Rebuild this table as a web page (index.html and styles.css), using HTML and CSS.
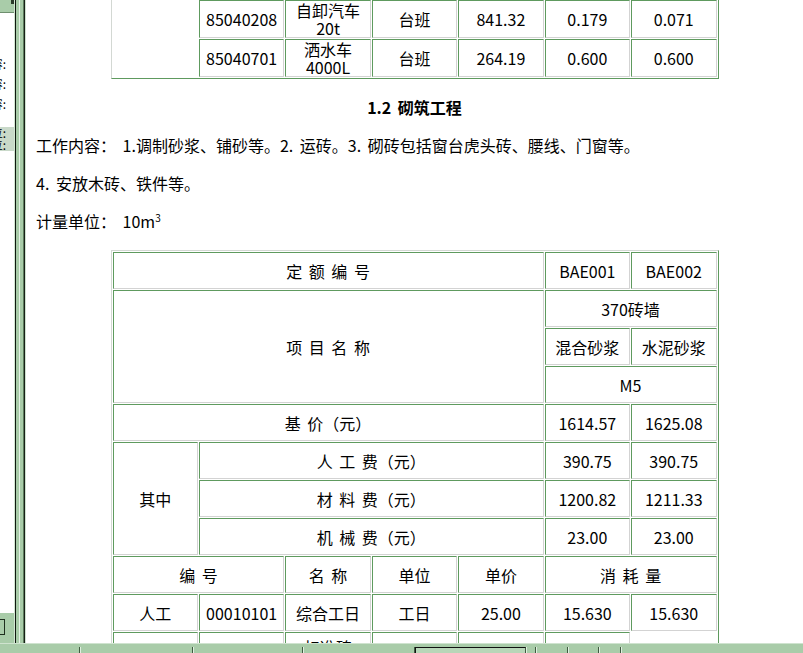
FILE: index.html
```html
<!DOCTYPE html>
<html lang="zh-CN">
<head>
<meta charset="utf-8">
<title>砌筑工程</title>
<link rel="stylesheet" href="styles.css">
</head>
<body>
<div class="app">
  <aside class="side">
    <div class="side-top"><span class="side-arrow"></span></div>
    <div class="side-list">
      <div class="side-item"><span>工作内容:</span></div>
      <div class="side-item"><span>工作内容:</span></div>
      <div class="side-item"><span>工作内容:</span></div>
      <div class="side-gap"></div>
      <div class="side-item sel"><span>计量单位:</span></div>
      <div class="side-item sel2"><span>计量单位:</span></div>
    </div>
    <div class="side-bottom"><span class="side-btn"></span></div>
  </aside>
  <div class="splitter"></div>
  <main class="doc">
    <table class="grid top-grid">
      <colgroup><col><col><col><col><col><col><col></colgroup>
      <tr>
        <td rowspan="2"></td>
        <td>85040208</td>
        <td>自卸汽车<br>20t</td>
        <td>台班</td>
        <td>841.32</td>
        <td>0.179</td>
        <td>0.071</td>
      </tr>
      <tr>
        <td>85040701</td>
        <td>洒水车<br>4000L</td>
        <td>台班</td>
        <td>264.19</td>
        <td>0.600</td>
        <td>0.600</td>
      </tr>
    </table>

    <h3 class="section-title">1.2 砌筑工程</h3>
    <p class="para">工作内容： 1.调制砂浆、铺砂等。2. 运砖。3. 砌砖包括窗台虎头砖、腰线、门窗等。</p>
    <p class="para">4. 安放木砖、铁件等。</p>
    <p class="para">计量单位： 10m<sup>3</sup></p>

    <table class="grid main-grid">
      <colgroup><col><col><col><col><col><col><col></colgroup>
      <tr>
        <td colspan="5">定 额 编 号</td>
        <td>BAE001</td>
        <td>BAE002</td>
      </tr>
      <tr>
        <td colspan="5" rowspan="3">项 目 名 称</td>
        <td colspan="2">370砖墙</td>
      </tr>
      <tr>
        <td>混合砂浆</td>
        <td>水泥砂浆</td>
      </tr>
      <tr>
        <td colspan="2">M5</td>
      </tr>
      <tr>
        <td colspan="5">基 价（元）</td>
        <td>1614.57</td>
        <td>1625.08</td>
      </tr>
      <tr>
        <td rowspan="3">其中</td>
        <td colspan="4">人 工 费（元）</td>
        <td>390.75</td>
        <td>390.75</td>
      </tr>
      <tr>
        <td colspan="4">材 料 费（元）</td>
        <td>1200.82</td>
        <td>1211.33</td>
      </tr>
      <tr>
        <td colspan="4">机 械 费（元）</td>
        <td>23.00</td>
        <td>23.00</td>
      </tr>
      <tr>
        <td colspan="2">编 号</td>
        <td>名 称</td>
        <td>单位</td>
        <td>单价</td>
        <td colspan="2">消 耗 量</td>
      </tr>
      <tr>
        <td>人工</td>
        <td>00010101</td>
        <td>综合工日</td>
        <td>工日</td>
        <td>25.00</td>
        <td>15.630</td>
        <td>15.630</td>
      </tr>
      <tr class="tall">
        <td rowspan="3">材料</td>
        <td>04130001</td>
        <td class="first-line">标准砖<br>240×115<br>×53</td>
        <td>千块</td>
        <td>230.00</td>
        <td>5.300</td>
        <td></td>
      </tr>
    </table>
  </main>
  <footer class="status">
    <span class="seg s1"></span>
    <span class="seg s2"></span>
    <span class="seg s3"></span>
    <span class="seg s4"></span>
    <span class="seg s5 sunk"></span>
    <span class="seg s6"></span>
    <span class="seg s7"></span>
    <span class="seg s8"></span>
    <span class="seg s9"></span>
    <span class="seg s10"></span>
  </footer>
</div>
</body>
</html>
```

FILE: styles.css
```css
html, body {
  margin: 0;
  padding: 0;
  width: 803px;
  height: 653px;
  overflow: hidden;
  background: #ffffff;
}

.app {
  display: grid;
  grid-template-columns: 14px 12px 1fr;
  grid-template-rows: 643px 10px;
  width: 803px;
  height: 653px;
  font-family: "Noto Sans CJK SC", "Noto Sans", sans-serif;
  color: #000;
}

/* ---------- left panel ---------- */
.side {
  grid-column: 1;
  grid-row: 1;
  display: flex;
  flex-direction: column;
  background: #a9cca9;
  overflow: hidden;
}
.side-top {
  height: 13px;
  flex: none;
  background: #a9cca9;
  border-bottom: 1px solid #6e8f6e;
  box-sizing: border-box;
  position: relative;
}
.side-arrow {
  position: absolute;
  right: 0;
  top: 0;
  width: 3px;
  height: 4px;
  background: #2b3b2b;
}
.side-list {
  flex: 1;
  background: #ffffff;
  padding-top: 44px;
  overflow: hidden;
}
.side-item {
  display: flex;
  justify-content: flex-end;
  width: 6px;
  height: 20px;
  font-size: 12px;
  line-height: 14px;
  white-space: nowrap;
}
.side-item span { flex: none; }
.side-gap { height: 10px; }
.side-item.sel,
.side-item.sel2 {
  width: 14px;
  height: 12px;
  line-height: 12px;
  background: #c9d9c9;
  padding-right: 8px;
  box-sizing: border-box;
}

.side-bottom {
  height: 30px;
  flex: none;
  background: #a9cca9;
  position: relative;
}
.side-btn {
  position: absolute;
  left: 0;
  top: 6px;
  width: 4px;
  height: 14px;
  border: 1px solid #1e2e1e;
  border-left: 0;
  background: #a9cca9;
}

/* ---------- splitter ---------- */
.splitter {
  grid-column: 2;
  grid-row: 1;
  background: linear-gradient(to right,
    #d3e6d3 0 1px,
    #101810 1px 2px,
    #a9cca9 2px 5px,
    #e3f1e3 5px 6px,
    #a9cca9 6px 9px,
    #5d7d5d 9px 10px,
    #182018 10px 11px,
    #cfe2cf 11px 12px);
}

/* ---------- document ---------- */
.doc {
  grid-column: 3;
  grid-row: 1;
  background: #ffffff;
  overflow: hidden;
  padding: 0 10px;
  font-size: 16px;
  line-height: 22px;
  word-spacing: 3px;
}

.grid {
  border-collapse: separate;
  border-spacing: 1px;
  table-layout: fixed;
  width: 608px;
  margin: 0 auto;
  border: 1px solid;
  border-color: #d3d8d3 #5e9a5e #5e9a5e #d3d8d3;
}
.grid td {
  border: 1px solid;
  border-color: #5e9a5e #d3d3d3 #d3d3d3 #5e9a5e;
  text-align: center;
  vertical-align: middle;
  height: 35px;
  padding: 0 2px;
  line-height: 18px;
  white-space: nowrap;
}
.grid td:empty {
  border-color: transparent;
}

.top-grid {
  margin-top: -2px;
  border-top-color: transparent;
}
.top-grid td { height: 36px; line-height: 18px; }

.section-title {
  font-size: 16px;
  font-weight: bold;
  text-align: center;
  margin: 17px 0 15px;
  line-height: 22px;
}

.para {
  margin: 16px 0;
  line-height: 22px;
}
.para sup {
  font-size: 10px;
  line-height: 0;
  vertical-align: 6px;
}

.main-grid {
  margin-top: 18px;
}
.main-grid .tall td { height: 60px; vertical-align: middle; }
.main-grid .tall td.first-line { vertical-align: top; padding-top: 5px; }

/* ---------- status bar ---------- */
.status {
  grid-column: 1 / 4;
  grid-row: 2;
  display: flex;
  background: #a9cca9;
  border-top: 1px solid #cfe3cf;
  box-sizing: border-box;
  padding-top: 3px;
}
.seg {
  flex: none;
  height: 100%;
  border-right: 1px solid #3f5a3f;
  border-left: 1px solid #e0efe0;
  box-sizing: border-box;
}
.s1 { width: 80px; border-left: 0; }
.s2 { width: 113px; }
.s3 { width: 110px; }
.s4 { width: 112px; }
.s5 { width: 111px; }
.sunk { border-top: 1px solid #111; border-left: 1px solid #111; background: #b8d6b8; }
.s6 { width: 10px; }
.s7 { width: 32px; }
.s8 { width: 31px; }
.s9 { width: 22px; }
.s10 { flex: 1; border-right: 0; }
```
